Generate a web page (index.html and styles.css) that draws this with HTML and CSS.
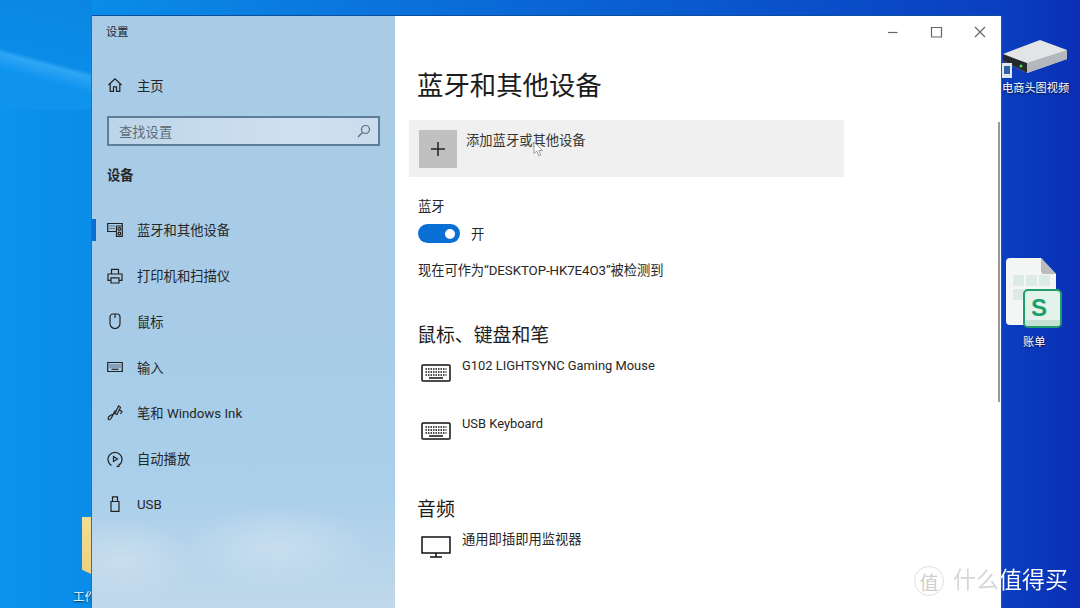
FILE: index.html
```html
<!DOCTYPE html>
<html lang="zh-CN">

<head>
  <meta charset="UTF-8">
  <title>设置</title>
  <link rel="stylesheet" href="styles.css">
</head>

<body>
  <div class="desktop">
    <div class="streak"></div>

    <div class="folder"></div>
    <div class="desk-label folder-label">工作</div>

    <svg class="disk-icon" viewBox="0 0 66 36" width="66" height="36">
      <path d="M1 15 38 1l27 10v9L25 34 1 22z" fill="#e2e4e6" />
      <path d="M1 15 25 24v10L1 22z" fill="#26292c" />
      <path d="M25 24 65 11v9L25 34z" fill="#b4b7bb" />
      <circle cx="19" cy="27" r="1.500" fill="#35e05a" />
    </svg>
    <div class="shortcut"><div class="shortcut-mark"></div></div>
    <div class="desk-label disk-label">电商头图视频</div>

    <svg class="sheet-icon" viewBox="0 0 50 68" width="50" height="68">
      <path d="M4 0h31l15 16v47a4 4 0 0 1-4 4H4a4 4 0 0 1-4-4V4a4 4 0 0 1 4-4z" fill="#f4f6f6" />
      <path d="M35 0l15 16H38a3 3 0 0 1-3-3z" fill="#b9bbbd" />
      <g fill="#dcebe6">
        <rect x="7" y="17" width="11" height="11" />
        <rect x="20" y="17" width="11" height="11" />
        <rect x="33" y="17" width="11" height="11" />
        <rect x="7" y="31" width="11" height="11" />
      </g>
      <rect x="18" y="32" width="37" height="37" rx="4" fill="#e3f3ec" stroke="#1f9d6b" stroke-width="2" />
      <path d="M19 62H54V65A3 3 0 0 1 51 68H22A3 3 0 0 1 19 65z" fill="#c4e3d5" />
      <text x="33" y="58" class="sheet-s">S</text>
    </svg>
    <div class="desk-label sheet-label">账单</div>

    <div class="window">
      <aside class="sidebar">
        <div class="app-title">设置</div>

        <a class="home-row">
          <svg class="nav-icon" viewBox="0 0 16 16" width="16" height="16">
            <path d="M1.500 8 8 1.800 14.500 8M3.200 6.800V14.300H6.500V9.800H9.500V14.300H12.800V6.800" />
          </svg>
          <span>主页</span>
        </a>

        <div class="search">
          <span>查找设置</span>
          <svg viewBox="0 0 14 14" width="14" height="14">
            <circle cx="8.500" cy="5.500" r="4" />
            <path d="M5.500 8.500 1 13" />
          </svg>
        </div>

        <div class="group-title">设备</div>

        <nav class="nav">
          <a class="nav-item active">
            <svg class="nav-icon" viewBox="0 0 16 16" width="16" height="16">
              <path d="M9.500 9.500H.7V1.500H15.300V14.300H9.500V4H15.300" />
              <path d="M2.500 4h5M2.500 6.500h5" stroke-dasharray="1 1" />
              <circle cx="12.400" cy="7" r="1.400" />
              <circle cx="12.400" cy="11.500" r="1.300" />
            </svg>
            <span>蓝牙和其他设备</span>
          </a>
          <a class="nav-item">
            <svg class="nav-icon" viewBox="0 0 16 16" width="16" height="16">
              <path d="M4.500 6V1.300H11.500V6M4 12.300H1V6H15V12.300H12M4 9.800H12V15H4z" />
            </svg>
            <span>打印机和扫描仪</span>
          </a>
          <a class="nav-item">
            <svg class="nav-icon" viewBox="0 0 16 16" width="16" height="16">
              <path d="M6 1H10A3 3 0 0 1 13 4V10.500A5 5 0 0 1 3 10.500V4A3 3 0 0 1 6 1zM8 1V5" />
            </svg>
            <span>鼠标</span>
          </a>
          <a class="nav-item">
            <svg class="nav-icon" viewBox="0 0 16 16" width="16" height="16">
              <path d="M.7 3.500H15.300V12.500H.7z" />
              <path d="M2.500 6h11M2.500 8h11" stroke-dasharray="1 1" />
              <path d="M4.500 10.300h7" />
            </svg>
            <span>输入</span>
          </a>
          <a class="nav-item">
            <svg class="nav-icon" viewBox="0 0 16 16" width="16" height="16">
              <path d="M11.500 1 8 8.500 10 9.500 13.500 2.500zM12.500 5 15 6.500 13.500 9" />
              <path d="M8.500 5.500C6 8 5.500 13 3 14.500 1 15.500.5 13 2 11.500S6 9 8 8.500" />
            </svg>
            <span>笔和 Windows Ink</span>
          </a>
          <a class="nav-item">
            <svg class="nav-icon" viewBox="0 0 16 16" width="16" height="16">
              <path d="M4.500 14.500A7 7 0 1 1 11.500 14.500M9.500 15.300H12V12.800" />
              <path d="M6.500 5.500 10.500 8 6.500 10.500z" />
            </svg>
            <span>自动播放</span>
          </a>
          <a class="nav-item">
            <svg class="nav-icon" viewBox="0 0 16 16" width="16" height="16">
              <path d="M4 5.500H12V15.300H4zM5.500 5.500V.8H10.500V5.500" />
            </svg>
            <span>USB</span>
          </a>
        </nav>
      </aside>

      <main class="main">
        <div class="title-bar">
          <svg viewBox="0 0 112 12" width="112" height="12">
            <path d="M1 6.500H10.500" />
            <path d="M44.500 1.500H54.500V11H44.500z" />
            <path d="M88 1 98 11M98 1 88 11" />
          </svg>
        </div>

        <h1 class="page-title">蓝牙和其他设备</h1>

        <div class="add-card">
          <div class="add-btn">
            <svg viewBox="0 0 16 16" width="16" height="16">
              <path d="M8 1V15M1 8H15" />
            </svg>
          </div>
          <span class="add-text">添加蓝牙或其他设备</span>
          <svg class="mouse-cursor" viewBox="0 0 11 16" width="11" height="16">
            <path d="M1 1V12.500L3.800 10 5.800 14.800 7.800 14 5.800 9.500H9.500z" />
          </svg>
        </div>

        <div class="field-label">蓝牙</div>
        <div class="toggle-row">
          <div class="toggle"><div class="knob"></div></div>
          <span>开</span>
        </div>
        <p class="note">现在可作为“DESKTOP-HK7E4O3”被检测到</p>

        <h2 class="section-title first">鼠标、键盘和笔</h2>
        <div class="device">
          <svg viewBox="0 0 30 18" width="30" height="18">
            <rect x="1" y="1" width="28" height="16" rx="1" />
            <path d="M4.500 5h21M4.500 8h21M4.500 11h21" stroke-dasharray="1.500 1" />
            <path d="M8 14H22" />
          </svg>
          <span class="device-latin">G102 LIGHTSYNC Gaming Mouse</span>
        </div>
        <div class="device">
          <svg viewBox="0 0 30 18" width="30" height="18">
            <rect x="1" y="1" width="28" height="16" rx="1" />
            <path d="M4.500 5h21M4.500 8h21M4.500 11h21" stroke-dasharray="1.500 1" />
            <path d="M8 14H22" />
          </svg>
          <span class="device-latin">USB Keyboard</span>
        </div>

        <h2 class="section-title audio">音频</h2>
        <div class="device monitor">
          <svg viewBox="0 0 30 22" width="30" height="22">
            <path d="M1 1H29V17H1zM15 17V21M9 21H21" />
          </svg>
          <span>通用即插即用监视器</span>
        </div>

        <div class="scrollbar"></div>
      </main>
    </div>

    <div class="watermark">
      <span class="wm-seal">值</span>
      <span class="wm-text">什么值得买</span>
    </div>
  </div>
</body>

</html>
```

FILE: styles.css
```css
* {
  box-sizing: border-box;
}

html,
body {
  margin: 0;
  padding: 0;
}

body {
  width: 1080px;
  height: 608px;
  overflow: hidden;
  font-family: Roboto, "Noto Sans CJK SC", sans-serif;
  color: #262626;
}

.desktop {
  position: relative;
  width: 1080px;
  height: 608px;
  overflow: hidden;
  background: linear-gradient(90deg, #0a93ef 0, #0a8ce9 92px, #0a3fc0 1001px, #0a2fb4 1080px);
}

.streak {
  position: absolute;
  left: 0;
  top: 0;
  width: 92px;
  height: 110px;
  background: linear-gradient(195deg, #0a86e2 0, #0a8ce8 70px, #2ea6f5 75px, #0f94ee 90px);
}

/* desktop icons */
.desk-label {
  position: absolute;
  font-size: 11.200px;
  line-height: 16px;
  color: #fff;
  white-space: nowrap;
  text-shadow: 0 1px 2px rgba(0, 0, 0, 0.8);
}

.folder {
  position: absolute;
  left: 82px;
  top: 517px;
  width: 20px;
  height: 62px;
  background: linear-gradient(180deg, #f3dc94 0, #eccf7c 100%);
  clip-path: polygon(0 0, 100% 0, 100% 100%, 0 85%);
}

.folder-label {
  left: 73px;
  top: 589px;
  font-size: 11.500px;
}

.disk-icon {
  position: absolute;
  left: 1002px;
  top: 39px;
}

.shortcut {
  position: absolute;
  left: 1001px;
  top: 63px;
  width: 11px;
  height: 15px;
  padding: 3px 2px 0 3px;
  background: #dfe6ee;
}

.shortcut-mark {
  height: 8px;
  background: #2f63a8;
}

.disk-label {
  left: 1002px;
  top: 81px;
}

.sheet-icon {
  position: absolute;
  left: 1006px;
  top: 258px;
  overflow: visible;
}

.sheet-s {
  font-family: "Liberation Sans", sans-serif;
  font-size: 24px;
  font-weight: 700;
  fill: #1f9d6b;
  text-anchor: middle;
}

.sheet-label {
  left: 1023px;
  top: 335px;
}

/* settings window */
.window {
  position: absolute;
  left: 92px;
  top: 16px;
  width: 909px;
  height: 592px;
  display: flex;
  box-shadow: 0 -1px 0 #0b4f9c, -1px 0 0 #2f6fb0, 1px 0 0 #555;
}

.sidebar {
  width: 303px;
  flex-shrink: 0;
  background:
    radial-gradient(ellipse 95px 42px at 185px 532px, #c8deef 0, rgba(200, 222, 239, 0) 100%),
    radial-gradient(ellipse 75px 42px at 30px 545px, #cadeee 0, rgba(202, 222, 238, 0) 100%),
    linear-gradient(180deg, #a9cbe6 0, #a8cce8 300px, #a9cfeb 470px, #c0d8ea 592px);
}

.sidebar svg,
.main svg {
  fill: none;
  stroke: #222;
  stroke-width: 1.200;
}

.app-title {
  height: 32px;
  padding-top: 1px;
  padding-left: 14px;
  font-size: 11.200px;
  line-height: 32px;
}

.home-row {
  display: flex;
  align-items: center;
  gap: 14px;
  height: 46px;
  margin-top: 14px;
  padding-left: 15px;
  font-size: 13.300px;
}

.search {
  display: flex;
  align-items: center;
  justify-content: space-between;
  width: 273px;
  height: 30px;
  margin: 8px 0 0 15px;
  padding: 0 7px 0 10px;
  border: 2px solid #5f7d96;
  background: linear-gradient(90deg, #bdd5e9 0, #cfe1f0 70%, #c9ddee 100%);
  font-size: 13.300px;
  color: #5f6c78;
}

.sidebar .search svg {
  stroke: #5f6c78;
}

.group-title {
  height: 20px;
  margin-top: 20px;
  padding-left: 15px;
  font-size: 13.300px;
  font-weight: 700;
  line-height: 20px;
}

.nav {
  display: flex;
  flex-direction: column;
  margin-top: 21px;
}

.nav-item {
  position: relative;
  display: flex;
  align-items: center;
  gap: 14px;
  height: 45.750px;
  padding-left: 15px;
  font-size: 13.300px;
}

.nav-item.active::before {
  content: "";
  position: absolute;
  left: 0;
  top: 12px;
  width: 4px;
  height: 22px;
  background: #0a6fd0;
}

.nav-icon {
  flex-shrink: 0;
}

.main {
  position: relative;
  flex: 1;
  padding-left: 23px;
  overflow: hidden;
  background: #fff;
  font-size: 13.300px;
}

.title-bar {
  display: flex;
  justify-content: flex-end;
  align-items: center;
  height: 32px;
  padding-right: 2px;
}

.main .title-bar svg {
  stroke: #666;
}

.page-title {
  margin: 20px 0 0 -1px;
  font-size: 26.400px;
  font-weight: 400;
  line-height: 36px;
  color: #1c1c1c;
}

.add-card {
  position: relative;
  display: flex;
  align-items: flex-start;
  gap: 9px;
  width: 435px;
  height: 57px;
  margin: 16px 0 0 -9px;
  padding: 10px;
  background: #f0f0f0;
}

.add-btn {
  display: flex;
  align-items: center;
  justify-content: center;
  width: 38px;
  height: 38px;
  background: #c0c0c0;
}

.main .add-btn svg {
  stroke-width: 1.500;
}

.add-text {
  padding-top: 1px;
  line-height: 20px;
  color: #333;
}

.main .mouse-cursor {
  position: absolute;
  left: 124px;
  top: 21px;
  fill: #fff;
  stroke: #888;
  stroke-width: 0.800;
}

.field-label {
  margin-top: 20px;
  line-height: 20px;
}

.toggle-row {
  display: flex;
  align-items: center;
  gap: 11px;
  height: 19px;
  margin-top: 7px;
}

.toggle {
  display: flex;
  align-items: center;
  justify-content: flex-end;
  width: 42px;
  height: 19px;
  padding-right: 5px;
  border-radius: 10px;
  background: #0a6fd4;
}

.knob {
  width: 10px;
  height: 10px;
  border-radius: 50%;
  background: #fff;
}

.note {
  margin: 18px 0 0;
  letter-spacing: -0.080px;
  line-height: 20px;
}

.section-title {
  margin: 23px 0 0 -1px;
  font-size: 18.900px;
  font-weight: 400;
  line-height: 28px;
  color: #1c1c1c;
}

.section-title.first {
  margin-top: 41px;
}

.section-title.audio {
  margin-top: 24px;
}

.device {
  display: flex;
  align-items: flex-start;
  gap: 11px;
  height: 58px;
  padding-left: 3px;
  line-height: 20px;
}

.section-title + .device {
  margin-top: 6px;
}

.device .device-latin {
  font-size: 12.900px;
}

.device svg {
  flex-shrink: 0;
  margin-top: 8px;
}

.main .device svg {
  stroke: #111;
  stroke-width: 1.500;
}

.device.monitor svg {
  margin-top: 6px;
}

.scrollbar {
  position: absolute;
  right: 1px;
  top: 106px;
  width: 2px;
  height: 280px;
  background: #999;
}

/* watermark */
.watermark {
  position: absolute;
  left: 914px;
  top: 566px;
  display: flex;
  align-items: center;
  gap: 9px;
}

.wm-seal {
  display: flex;
  align-items: center;
  justify-content: center;
  width: 30px;
  height: 30px;
  border: 1px solid #e0e0e0;
  border-radius: 50%;
  font-size: 19px;
  color: #cfcfcf;
}

.wm-text {
  font-size: 23px;
  line-height: 30px;
  color: transparent;
  background: linear-gradient(90deg, #d6d6d6 0, #d6d6d6 48px, #fff 48px);
  -webkit-background-clip: text;
  background-clip: text;
}
```
